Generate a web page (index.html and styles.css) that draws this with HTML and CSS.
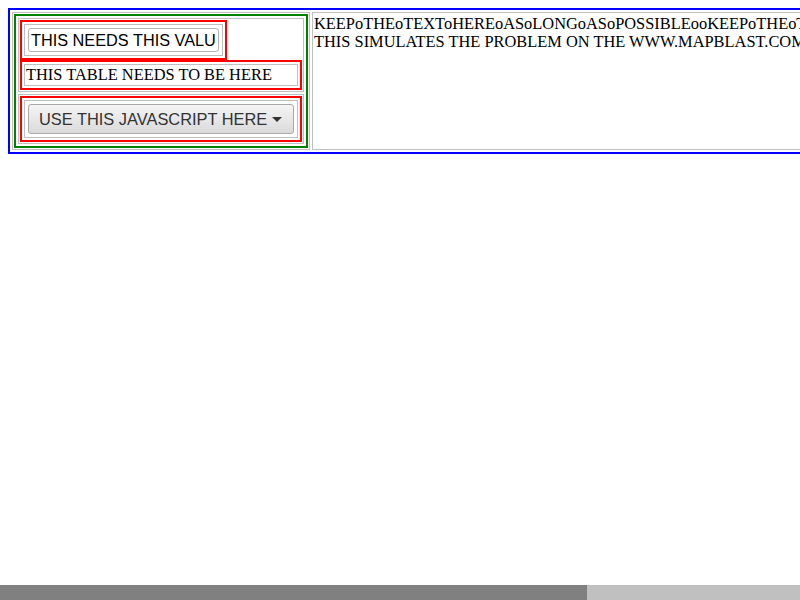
FILE: index.html
```html
<!DOCTYPE html>
<html>
<head>
<meta charset="utf-8">
<link rel="stylesheet" href="styles.css">
</head>
<body>
<table class="t outer">
  <tr>
    <td class="c leftcell">
      <table class="t green">
        <tr>
          <td class="c">
            <table class="t red">
              <tr><td class="c"><input class="field" type="text" value="THIS NEEDS THIS VALUE"></td></tr>
            </table>
            <table class="t red full">
              <tr><td class="c label">THIS TABLE NEEDS TO BE HERE</td></tr>
            </table>
          </td>
        </tr>
        <tr>
          <td class="c">
            <table class="t red full">
              <tr><td class="c"><div class="select"><span class="select-text">USE THIS JAVASCRIPT HERE</span><span class="caret"></span></div></td></tr>
            </table>
          </td>
        </tr>
      </table>
    </td>
    <td class="c textcell">KEEPoTHEoTEXToHEREoASoLONGoASoPOSSIBLEooKEEPoTHEoTEXToHEREoASoLONGoASoPOSSIBLEooKEEPoTHEoTEXT<br>THIS SIMULATES THE PROBLEM ON THE WWW.MAPBLAST.COM SITE</td>
  </tr>
</table>
<div class="hscroll"><div class="hscroll-thumb"></div></div>
</body>
</html>
```
FILE: styles.css
```css
html {
  overflow: hidden;
}
body {
  margin: 8px;
  font-family: "Liberation Serif", "Times New Roman", serif;
  font-size: 16.4px;
  color: #000;
  background: #fff;
  width: 1100px;
}
.t {
  border-collapse: separate;
  border-spacing: 2px;
}
.c {
  border: 1px solid #c0c0c0;
  padding: 1px;
}
.outer {
  border: 2px solid #0000ff;
}
.green {
  border: 2px solid #008000;
}
.red {
  border: 2px solid #ff0000;
}
.full {
  width: 100%;
}
.leftcell {
  vertical-align: top;
}
.textcell {
  vertical-align: top;
  white-space: nowrap;
  line-height: 18px;
  padding: 2px 1px 1px 1px;
}
.label {
  line-height: 18px;
}
.field {
  display: block;
  margin: 2px;
  box-sizing: border-box;
  width: 191px;
  height: 24px;
  padding: 1px 3px 1px 2px;
  border: 1px solid #b4b4b4;
  border-radius: 3px;
  font-family: "Liberation Sans", Arial, sans-serif;
  font-size: 16.3px;
  color: #000;
  background: #fff;
}
.select {
  margin: 2px;
  box-sizing: border-box;
  width: 266px;
  height: 30px;
  padding: 0 11px 0 10px;
  border: 1px solid #a9a9a9;
  border-radius: 3px;
  background: linear-gradient(#f5f5f5, #dadada);
  display: flex;
  align-items: center;
  font-family: "Liberation Sans", Arial, sans-serif;
  font-size: 16.4px;
  color: #333;
}
.select-text {
  flex: 1;
}
.caret {
  width: 0;
  height: 0;
  border-left: 5px solid transparent;
  border-right: 5px solid transparent;
  border-top: 5px solid #333;
}
.hscroll {
  position: fixed;
  left: 0;
  bottom: 0;
  width: 800px;
  height: 15px;
  background: #c0c0c0;
}
.hscroll-thumb {
  width: 587px;
  height: 15px;
  background: #808080;
}
```
